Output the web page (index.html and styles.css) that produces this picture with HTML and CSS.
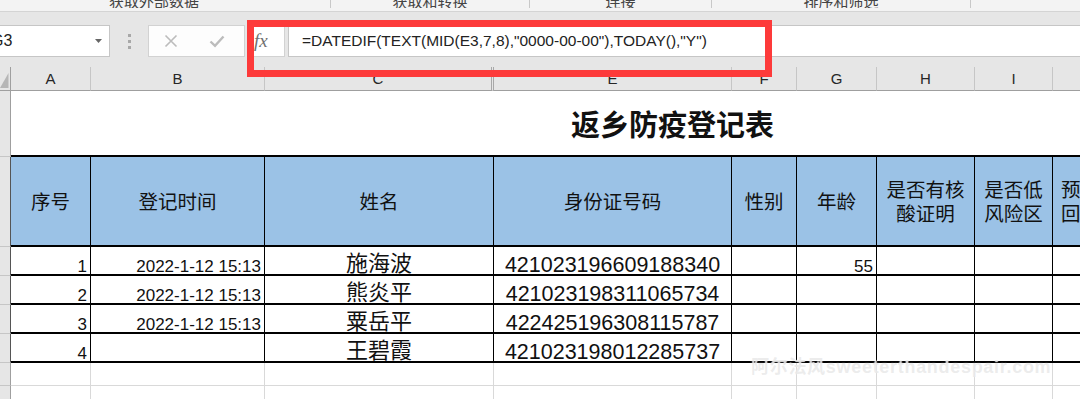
FILE: index.html
```html
<!DOCTYPE html>
<html lang="zh-CN">
<head>
  <meta charset="UTF-8" />
  <title>返乡防疫登记表</title>
  <link rel="stylesheet" href="styles.css">
</head>
<body>
  <div class="ribbon">
    <div class="group g1"><span>获取外部数据</span></div>
    <div class="group g2"><span>获取和转换</span></div>
    <div class="group g3"><span>连接</span></div>
    <div class="group g4"><span>排序和筛选</span></div>
    <div class="group g5"></div>
  </div>

  <div class="formula-band">
    <div class="formula-bar">
      <div class="name-box">
        <span>G3</span>
        <svg class="caret" width="7" height="4" viewBox="0 0 7 4"><path d="M0 0H7L3.5 4Z" fill="#666"/></svg>
      </div>
      <div class="grip">
        <svg width="5" height="15" viewBox="0 0 5 15">
          <rect x="1" y="0" width="3" height="3" fill="#a8a8a8"/>
          <rect x="1" y="6" width="3" height="3" fill="#a8a8a8"/>
          <rect x="1" y="12" width="3" height="3" fill="#a8a8a8"/>
        </svg>
      </div>
      <div class="edit-buttons">
        <svg class="cancel" width="14" height="14" viewBox="0 0 14 14"><path d="M1.5 1.5L12.5 12.5M12.5 1.5L1.5 12.5" stroke="#bcbcbc" stroke-width="1.6"/></svg>
        <svg class="enter" width="16" height="14" viewBox="0 0 16 14"><path d="M1.5 7.5L6 11.8L14.5 2.5" fill="none" stroke="#bcbcbc" stroke-width="2.4"/></svg>
      </div>
      <div class="fx-box">fx</div>
      <div class="formula-input">=DATEDIF(TEXT(MID(E3,7,8),"0000-00-00"),TODAY(),"Y")</div>
    </div>
  </div>

  <table class="sheet">
    <colgroup>
      <col style="width:11px"><col style="width:80px"><col style="width:174px"><col style="width:229px">
      <col style="width:238px"><col style="width:65px"><col style="width:80px"><col style="width:98px">
      <col style="width:78px"><col style="width:80px">
    </colgroup>
    <tr class="colhead">
      <th class="corner"><svg width="11" height="23" viewBox="0 0 11 23"><path d="M8.5 6V21H0Z" fill="#b6b6b6"/></svg></th>
      <th>A</th><th>B</th><th class="hidden-after">C</th><th>E</th><th>F</th><th>G</th><th>H</th><th>I</th><th>J</th>
    </tr>
    <tr class="title-row">
      <td class="rh"></td>
      <td class="title" colspan="9">返乡防疫登记表</td>
    </tr>
    <tr class="head-row">
      <td class="rh rh-dark"></td>
      <td>序号</td>
      <td class="thick">登记时间</td>
      <td class="thick">姓名</td>
      <td class="thick">身份证号码</td>
      <td>性别</td>
      <td>年龄</td>
      <td><span class="line">是否有核</span><span class="line">酸证明</span></td>
      <td><span class="line">是否低</span><span class="line">风险区</span></td>
      <td class="wrap"><span class="line">预计返</span><span class="line">回时间</span></td>
    </tr>
    <tr class="data-row">
      <td class="rh rh-dark"></td>
      <td class="num">1</td>
      <td class="num thick">2022-1-12 15:13</td>
      <td class="name thick">施海波</td>
      <td class="id thick">421023196609188340</td>
      <td></td>
      <td class="num">55</td>
      <td></td><td></td><td></td>
    </tr>
    <tr class="data-row">
      <td class="rh rh-dark"></td>
      <td class="num">2</td>
      <td class="num thick">2022-1-12 15:13</td>
      <td class="name thick">熊炎平</td>
      <td class="id thick">421023198311065734</td>
      <td></td><td></td><td></td><td></td><td></td>
    </tr>
    <tr class="data-row">
      <td class="rh rh-dark"></td>
      <td class="num">3</td>
      <td class="num thick">2022-1-12 15:13</td>
      <td class="name thick">粟岳平</td>
      <td class="id thick">422425196308115787</td>
      <td></td><td></td><td></td><td></td><td></td>
    </tr>
    <tr class="data-row">
      <td class="rh rh-dark"></td>
      <td class="num">4</td>
      <td class="num thick"></td>
      <td class="name thick">王碧霞</td>
      <td class="id thick">421023198012285737</td>
      <td></td><td></td><td></td><td></td><td></td>
    </tr>
    <tr class="blank-row">
      <td class="rh"></td><td></td><td></td><td></td><td></td><td></td><td></td><td></td><td></td><td></td>
    </tr>
    <tr class="blank-row">
      <td class="rh"></td><td></td><td></td><td></td><td></td><td></td><td></td><td></td><td></td><td></td>
    </tr>
  </table>

  <div class="watermark">阿尔法风sweeterthandespair.com</div>
  <div class="highlight"></div>
</body>
</html>
```

FILE: styles.css
```css
* {
  box-sizing: border-box;
}
body {
  margin: 0;
  width: 1080px;
  height: 399px;
  overflow: hidden;
  position: relative;
  background: #fff;
  color: #222;
  font-family: "Liberation Sans", "Noto Sans CJK SC", sans-serif;
}

/* ribbon group labels, cut off at the top */
.ribbon {
  display: flex;
  height: 12px;
  padding-bottom: 3px;
  background: #f3f3f3;
  border-bottom: 1px solid #d4d4d4;
}
.group {
  height: 8px;
  overflow: hidden;
  display: flex;
  justify-content: center;
  align-items: flex-end;
  border-right: 1px solid #c8c8c8;
  font: 15px/1 "Noto Sans CJK SC", sans-serif;
  color: #444;
}
.g1 { width: 331px; padding-right: 22px; }
.g2 { width: 199px; }
.g3 { width: 182px; }
.g4 { width: 259px; }
.g5 { flex: 1; border-right: none; }

/* formula bar */
.formula-band {
  background: #e6e6e6;
  padding: 13px 0 10px;
}
.formula-bar {
  display: flex;
  height: 32px;
}
.name-box {
  margin-left: -12px;
  width: 122px;
  display: flex;
  align-items: center;
  padding: 0 7px 0 2px;
  background: #fff;
  border: 1px solid #c6c6c6;
  font-size: 16px;
  color: #222;
}
.caret {
  margin-left: auto;
}
.grip {
  width: 38px;
  display: flex;
  justify-content: center;
  align-items: center;
}
.edit-buttons {
  width: 97px;
  display: flex;
  align-items: center;
  padding-left: 15px;
  gap: 31px;
  background: #fdfdfd;
  border: 1px solid #d2d2d2;
}
.fx-box {
  margin-left: 4px;
  width: 36px;
  display: flex;
  align-items: center;
  padding-left: 4px;
  background: #fff;
  border: 1px solid #d2d2d2;
  font: italic 19px "Liberation Serif", serif;
  color: #707070;
}
.formula-input {
  margin-left: 3px;
  flex: 1;
  display: flex;
  align-items: center;
  padding-left: 13px;
  background: #fff;
  border: 1px solid #c6c6c6;
  border-right: none;
  font-size: 15.5px;
  color: #222;
}

/* worksheet grid */
.sheet {
  width: 1133px;
  table-layout: fixed;
  border-collapse: separate;
  border-spacing: 0;
}
.sheet td, .sheet th {
  padding: 0;
  overflow: hidden;
  white-space: nowrap;
}
.colhead th {
  height: 24px;
  background: #e6e6e6;
  border-right: 1px solid #c6c6c6;
  border-bottom: 1px solid #9f9f9f;
  font-size: 15px;
  font-weight: normal;
  color: #262626;
  line-height: 22px;
}
.colhead .corner {
  line-height: 0;
  vertical-align: top;
  border-right-color: #9f9f9f;
}
.colhead .hidden-after {
  border-right: 3px double #a8a8a8;
}
.rh {
  background: #e6e6e6;
  border-right: 1px solid #9f9f9f;
  border-bottom: 1px solid #c6c6c6;
}
.rh-dark {
  border-right-color: #555;
}

.title-row td {
  height: 66px;
}
.title {
  border-bottom: 2px solid #000;
  padding-left: 560px !important;
  font: bold 29px/1 "Noto Sans CJK SC", sans-serif;
  color: #111;
}

.head-row td {
  height: 90px;
  text-align: center;
  vertical-align: middle;
  font: 19.5px/24px "Noto Sans CJK SC", sans-serif;
  color: #111;
}
.head-row td:not(.rh) {
  background: #9bc2e6;
  border-right: 1px solid #000;
  border-bottom: 2px solid #000;
}
.head-row .line {
  display: block;
  height: 24px;
  line-height: 24px;
}
.head-row .wrap {
  text-align: left;
  padding-left: 8px;
}

.data-row td {
  height: 29px;
  vertical-align: bottom;
}
.data-row td:not(.rh) {
  border-right: 1px solid #000;
  border-bottom: 2px solid #000;
}
.sheet .thick {
  border-right: 2px solid #4a4a4a;
}
.num {
  text-align: right;
  padding-right: 3px !important;
  font-size: 17px;
  line-height: 15px;
  color: #111;
}
.name {
  text-align: center;
  padding-bottom: 3px !important;
  font: 22px/20px "Noto Sans CJK SC", sans-serif;
  color: #111;
}
.id {
  text-align: center;
  font-size: 21.5px;
  line-height: 18px;
  color: #111;
}

.blank-row td {
  height: 23px;
}
.blank-row td:not(.rh) {
  border-right: 1px solid #d9d9d9;
  border-bottom: 1px solid #d9d9d9;
}

/* overlays */
.watermark {
  position: absolute;
  left: 751px;
  top: 352px;
  font: bold 18px "Liberation Sans", "Noto Sans CJK SC", sans-serif;
  color: rgba(200, 200, 200, 0.35);
  text-shadow: 0 0 1px rgba(255, 255, 255, 0.9);
  letter-spacing: 0.7px;
}
.highlight {
  position: absolute;
  left: 247px;
  top: 20px;
  width: 525px;
  height: 57px;
  border: 7px solid #fd3a3a;
}
```
